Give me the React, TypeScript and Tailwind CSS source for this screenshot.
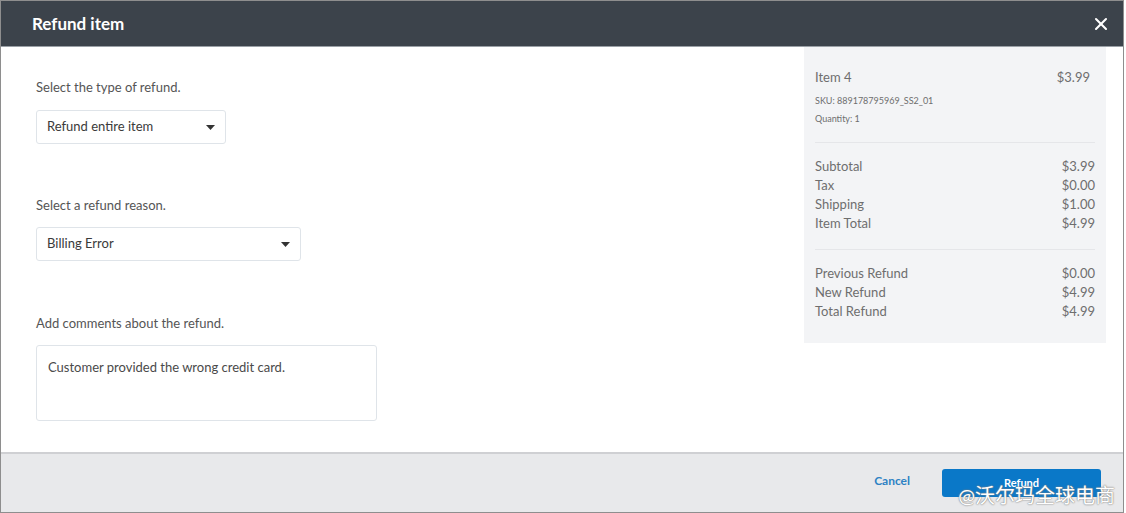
import { X } from "lucide-react";

const font = { fontFamily: "Lato, 'Noto Sans CJK SC', sans-serif" };

function Caret() {
  return (
    <svg width="9" height="5" viewBox="0 0 9 5" className="shrink-0">
      <path d="M0 0h9L4.5 5z" fill="#333" />
    </svg>
  );
}

function Select({ value, width }: { value: string; width: string }) {
  return (
    <div
      className={`${width} h-[34px] flex items-center justify-between pl-[10px] pr-[10px] border border-[#dfe4e9] rounded-[3px] bg-white text-[13px] text-[#3a3a3a]`}
    >
      <span>{value}</span>
      <Caret />
    </div>
  );
}

function Row({ label, value }: { label: string; value: string }) {
  return (
    <div className="flex justify-between h-[19px] leading-[19px]">
      <span>{label}</span>
      <span>{value}</span>
    </div>
  );
}

export default function App() {
  return (
    <div style={font} className="relative w-[1124px] h-[513px] border border-[#8e8e8e] bg-white flex flex-col overflow-hidden">
      {/* Header */}
      <div className="h-[46px] shrink-0 bg-[#3c434b] border-b border-[#9aa0a6] flex items-center justify-between pl-[31px] pr-[12px]">
        <h1 className="text-white text-[17px] font-bold">Refund item</h1>
        <X className="text-white w-[20px] h-[20px]" strokeWidth={2.5} />
      </div>

      {/* Body */}
      <div className="flex-1 flex">
        <div className="flex-1 pl-[35px] pt-[31px] text-[#555]">
          <p className="text-[13px] leading-[18px]">Select the type of refund.</p>
          <div className="mt-[14px]">
            <Select value="Refund entire item" width="w-[190px]" />
          </div>
          <p className="text-[13px] leading-[18px] mt-[52px]">Select a refund reason.</p>
          <div className="mt-[13px]">
            <Select value="Billing Error" width="w-[265px]" />
          </div>
          <p className="text-[13px] leading-[18px] mt-[53px]">Add comments about the refund.</p>
          <div className="mt-[13px] w-[341px] h-[76px] border border-[#dfe4e9] rounded-[3px] px-[11px] pt-[12px] text-[13px] text-[#4a4a4a]">
            Customer provided the wrong credit card.
          </div>
        </div>

        <div className="w-[302px] h-[296px] mr-[17px] bg-[#f3f4f6] px-[11px] pt-[22px] text-[13px] text-[#6e6e6e]">
          <div className="flex justify-between pr-[5px] leading-[16px]">
            <span>Item 4</span>
            <span>$3.99</span>
          </div>
          <p className="text-[9px] leading-[11px] mt-[10px]">SKU: 889178795969_SS2_01</p>
          <p className="text-[9px] leading-[11px] mt-[7px]">Quantity: 1</p>
          <div className="border-t border-[#e5e6e9] mt-[18px] pt-[14px]">
            <Row label="Subtotal" value="$3.99" />
            <Row label="Tax" value="$0.00" />
            <Row label="Shipping" value="$1.00" />
            <Row label="Item Total" value="$4.99" />
          </div>
          <div className="border-t border-[#e5e6e9] mt-[16px] pt-[14px]">
            <Row label="Previous Refund" value="$0.00" />
            <Row label="New Refund" value="$4.99" />
            <Row label="Total Refund" value="$4.99" />
          </div>
        </div>
      </div>

      {/* Footer */}
      <div className="h-[60px] shrink-0 bg-[#e8e9eb] border-t-2 border-[#cfd0d3] flex items-center justify-end pr-[22px] gap-[32px]">
        <button className="text-[12px] font-bold text-[#2d82c4] mb-[5px]">Cancel</button>
        <button className="w-[159px] h-[28px] rounded-[3px] bg-[#0a78c8] text-white text-[11px] font-bold">
          Refund
        </button>
      </div>

      <div
        className="absolute right-[8px] bottom-[5px] text-[20px] leading-[24px] text-white"
        style={{ textShadow: "0 0 1px #777, 0 0 2px #888" }}
      >
        @沃尔玛全球电商
      </div>
    </div>
  );
}
